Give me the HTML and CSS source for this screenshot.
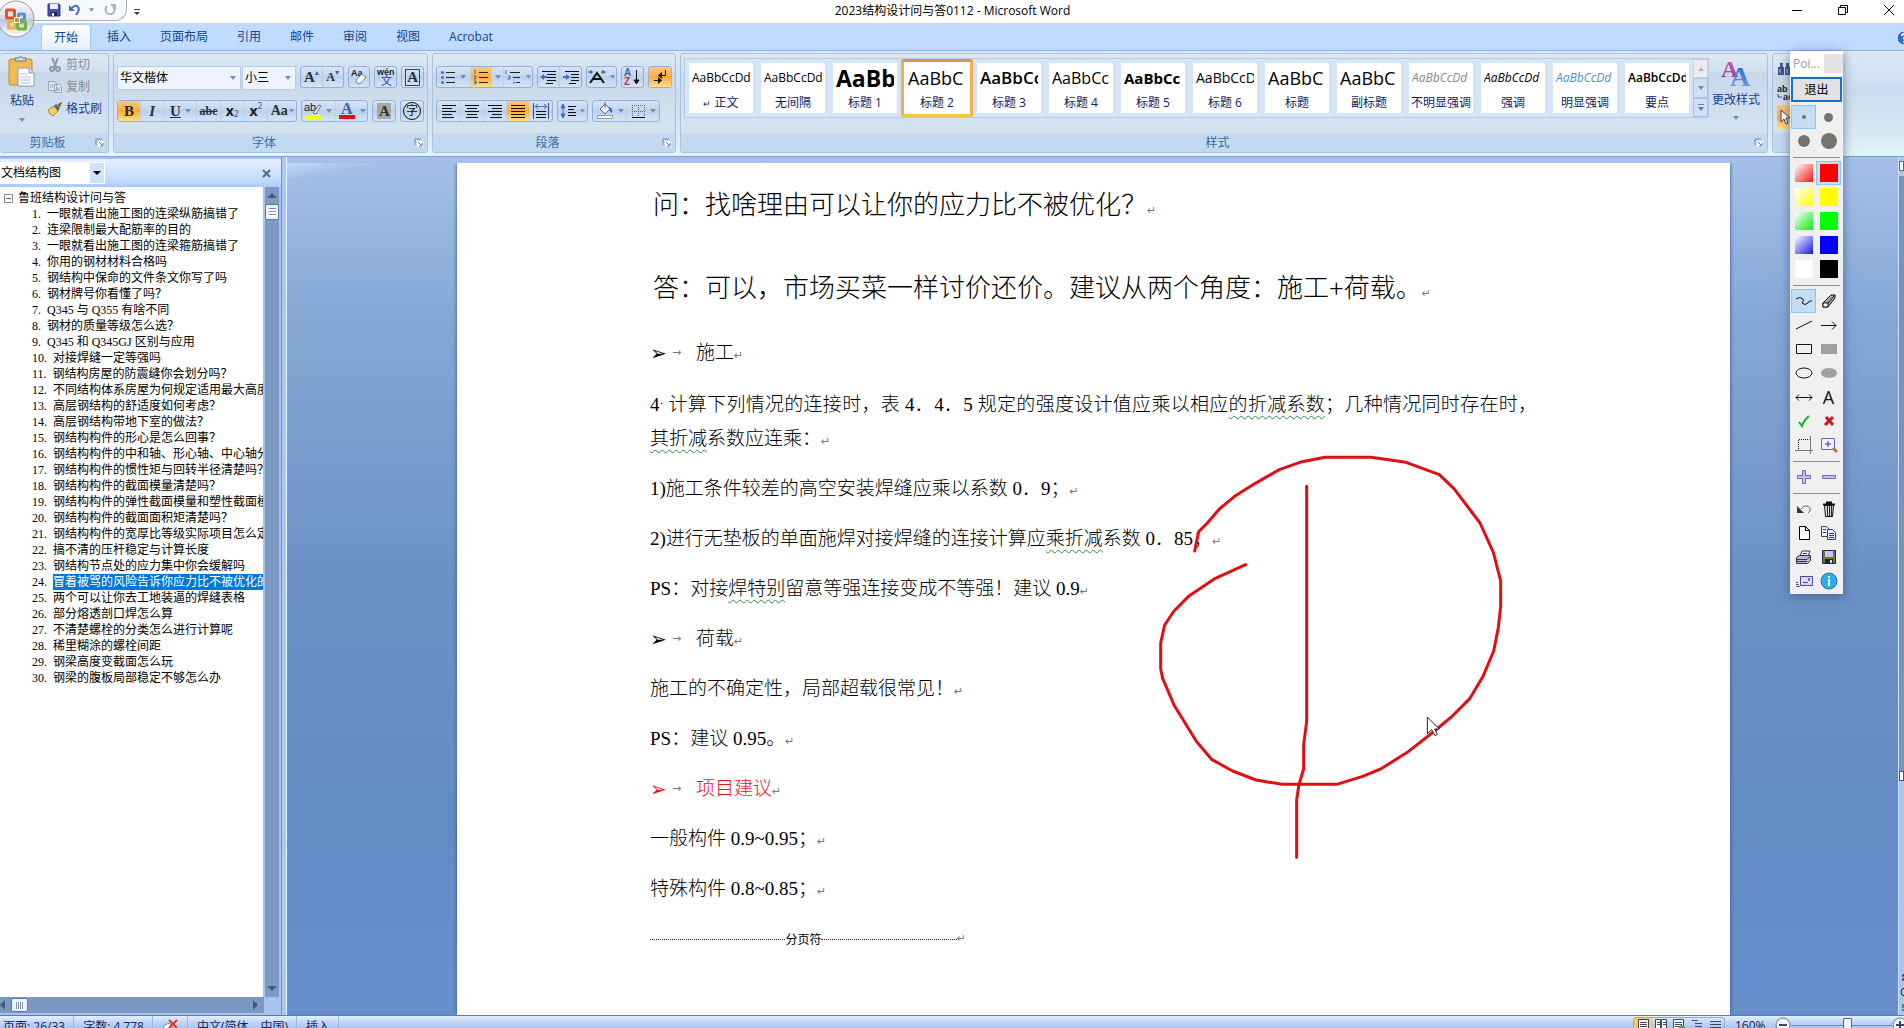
FILE: index.html
```html
<!DOCTYPE html>
<html lang="zh-CN">
<head>
<meta charset="utf-8">
<title>2023结构设计问与答0112 - Microsoft Word</title>
<link rel="stylesheet" href="styles.css">
</head>
<body>
<svg class="defs" aria-hidden="true">
  <defs>
    <linearGradient id="orb" x1="0" y1="0" x2="0" y2="1"><stop offset="0" stop-color="#fdfdfe"/><stop offset=".5" stop-color="#d3d9e6"/><stop offset=".52" stop-color="#bcc6d8"/><stop offset="1" stop-color="#fff"/></linearGradient>
    <linearGradient id="pink" x1="0" y1="0" x2="0" y2="1"><stop offset="0" stop-color="#e35fb2"/><stop offset="1" stop-color="#7a3c9a"/></linearGradient>
    <linearGradient id="blue" x1="0" y1="0" x2="0" y2="1"><stop offset="0" stop-color="#2c5fb4"/><stop offset="1" stop-color="#6fa3ee"/></linearGradient>
    <symbol id="launch" viewBox="0 0 9 9"><path d="M1 7V1h6" fill="none" stroke="#6a87b5"/><path d="M3 3h6v6H3z" fill="#fff"/><path d="M4 4l3 3M8 5v3H5" fill="none" stroke="#5478ac"/></symbol>
    <symbol id="caret" viewBox="0 0 6 4"><path d="M0 0h6L3 4z" fill="#6d8fc4"/></symbol>
  </defs>
</svg>

<header class="titlebar">
  <div class="quick">
    <button class="q" aria-label="保存"><svg width="14" height="14" viewBox="0 0 14 14"><path d="M1 1h11l1 1v11H1z" fill="#4d4fb6" stroke="#2f3190"/><path d="M3 1h8v5H3z" fill="#e9ecfb"/><path d="M4 9h6v4H4z" fill="#20235e"/><path d="M5 10h2v3H5z" fill="#fff"/></svg></button>
    <button class="q" aria-label="撤消"><svg width="12" height="12" viewBox="0 0 12 12"><path d="M2 5q3-4 6-3q3 2 1 6l-2 3" fill="none" stroke="#3d6fc4" stroke-width="2"/><path d="M0 1v6h6z" fill="#3d6fc4"/></svg></button>
    <svg width="5" height="4"><use href="#caret"/></svg>
    <button class="q redo" aria-label="重复"><svg width="12" height="12" viewBox="0 0 12 12"><path d="M3 2q-3 4 0 7q4 3 7-1q1-3-1-5" fill="none" stroke="#adb3bf" stroke-width="2"/><path d="M6 0h6v6z" fill="#adb3bf"/></svg></button>
  </div>
  <button class="q more" aria-label="自定义"><svg width="6" height="6"><path d="M0 0h6v1H0zM0 3h6L3 6z" fill="#333d50"/></svg></button>
  <h1>2023结构设计问与答0112 - Microsoft Word</h1>
  <div class="winbtns">
    <button aria-label="最小化"><svg width="12" height="12"><path d="M1 6.500h10" stroke="#000"/></svg></button>
    <button aria-label="还原"><svg width="12" height="12" fill="none" stroke="#000"><path d="M1.500 3.500h7v7h-7zM3.500 3V1.500h7v7H9"/></svg></button>
    <button aria-label="关闭"><svg width="12" height="12"><path d="M1 1l10 10M11 1L1 11" stroke="#000"/></svg></button>
  </div>
  <button class="orb" aria-label="Office 按钮"><svg width="36" height="38" viewBox="0 0 36 38"><circle cx="16" cy="19" r="18" fill="url(#orb)" stroke="#8d95a6"/><g fill="none" stroke-width="3"><rect x="6.500" y="10" width="8" height="8" rx="1" stroke="#d9542b"/><rect x="18.500" y="14" width="6" height="6" rx="1" stroke="#4a9ad6"/><rect x="8.500" y="21" width="7" height="7" rx="1" stroke="#f0b232"/><rect x="17.500" y="22" width="8" height="7" rx="1" stroke="#77b43c"/></g><path d="M14 17h6v6h-6z" fill="#fff8e0"/><path d="M15 18h4v4h-4z" fill="#e58a35"/></svg></button>
</header>

<nav class="tabs">
  <button class="tab on">开始</button><button class="tab">插入</button><button class="tab">页面布局</button><button class="tab">引用</button><button class="tab">邮件</button><button class="tab">审阅</button><button class="tab">视图</button><button class="tab">Acrobat</button>
  <button class="help" aria-label="帮助"><svg width="16" height="16" viewBox="0 0 16 16"><circle cx="8" cy="8" r="7" fill="#2f6fd0" stroke="#e8f0ff"/><path d="M6 6q0-2 2-2t2 2q0 1-2 2v1.500M8 11v1.500" stroke="#fff" stroke-width="2" fill="none"/></svg></button>
</nav>

<div class="ribbon">
  <section class="group g-clip">
    <div class="body">
      <button class="paste">
        <svg width="28" height="32" viewBox="0 0 28 32"><rect x="1" y="3" width="23" height="26" rx="2" fill="#eebb55" stroke="#c08a35"/><path d="M7 5h11V2h-3q-2-3-5 0H7z" fill="#d7dbe2" stroke="#6b7280"/><path d="M10 12h11l5 5v13H10z" fill="#fff" stroke="#8b97ad"/><path d="M21 12v5h5" fill="#dbe4f2" stroke="#8b97ad"/><path d="M12 18h7M12 21h11M12 24h11M12 27h11" stroke="#b4bccb"/></svg>
        <span>粘贴</span><svg width="6" height="4"><use href="#caret"/></svg>
      </button>
      <div class="stack">
        <button class="line off"><svg width="16" height="16" viewBox="0 0 16 16" fill="none" stroke="#8f99ab" stroke-width="2"><path d="M5 1l4 9M11 1L7 10"/><circle cx="5" cy="12" r="2"/><circle cx="11" cy="12" r="2"/></svg>剪切</button>
        <button class="line off"><svg width="16" height="16" viewBox="0 0 16 16" fill="#e3e8f1" stroke="#98a4b9"><path d="M1.500 2.500h6l2 2v7h-8zM7.500 5.500h5l2 2v6h-7z"/><path d="M3 6h4M3 8h3M9 9h4M9 11h4"/></svg>复制</button>
        <button class="line"><svg width="16" height="16" viewBox="0 0 16 16"><path d="M1 9l6-4 4 5-5 5q-3-1-5-6z" fill="#f2cf5f" stroke="#b18a2b"/><path d="M7 5l2-2 4 4-2 3z" fill="#5a6472"/><path d="M10 4l4-3 1 1-2 4z" fill="#8a6a30"/></svg>格式刷</button>
      </div>
    </div>
    <footer><span>剪贴板</span><button aria-label="剪贴板设置"><svg width="9" height="9"><use href="#launch"/></svg></button></footer>
  </section>

  <section class="group g-font">
    <div class="body rows">
      <div class="row">
        <div class="combos"><select class="combo face" aria-label="字体"><option>华文楷体</option></select><select class="combo size" aria-label="字号"><option>小三</option></select></div>
        <div class="set"><button class="w22 serif">A<sup class="tri">▴</sup></button><button class="w22 serif small">A<sup class="tri">▾</sup></button></div>
        <div class="set"><button class="w22" aria-label="清除格式"><svg width="18" height="18" viewBox="0 0 18 18"><text x="1" y="8" class="t9">Aa</text><path d="M6 12l6-6 4 3-6 7q-4 0-4-4z" fill="#f4f5fb" stroke="#7384ac"/></svg></button></div>
        <div class="set"><button class="w22" aria-label="拼音指南"><svg width="18" height="18" viewBox="0 0 18 18"><text x="0" y="7" class="t8">wén</text><text x="4" y="17" class="t10">文</text></svg></button></div>
        <div class="set"><button class="w22 serif"><span class="boxed">A</span></button></div>
      </div>
      <div class="row">
        <div class="set"><button class="w22 serif on">B</button><button class="w24 serif"><i class="it">I</i></button><button class="w34 serif"><u>U</u><svg width="6" height="4"><use href="#caret"/></svg></button><button class="w24 serif tiny"><s>abc</s></button><button class="w24 sans">x<sub>2</sub></button><button class="w24 sans">x<sup>2</sup></button><button class="w30 serif mid">Aa<svg width="5" height="4"><use href="#caret"/></svg></button></div>
        <div class="set"><button class="w34" aria-label="突出显示"><svg width="18" height="18" viewBox="0 0 18 18"><text x="0" y="9" class="t10b">ab</text><path d="M9 11l6-8 2 1-5 8z" fill="#e8ecf5" stroke="#5d6d94"/><path d="M1 13h16v4H1z" fill="#ff0"/></svg><svg width="6" height="4"><use href="#caret"/></svg></button><button class="w33" aria-label="字体颜色"><svg width="18" height="18" viewBox="0 0 18 18"><text x="3" y="12" class="t16">A</text><path d="M1 13h16v4H1z" fill="#e30f17"/></svg><svg width="6" height="4"><use href="#caret"/></svg></button></div>
        <div class="set"><button class="w22 serif"><span class="shade">A</span></button></div>
        <div class="set"><button class="w22"><span class="ring">字</span></button></div>
      </div>
    </div>
    <footer><span>字体</span><button aria-label="字体设置"><svg width="9" height="9"><use href="#launch"/></svg></button></footer>
  </section>

  <section class="group g-para">
    <div class="body rows">
      <div class="row">
        <div class="set">
          <button class="w33" aria-label="项目符号"><svg width="16" height="16" viewBox="0 0 16 16"><path d="M6 3.500h9M6 8.500h9M6 13.500h9" stroke="#222"/><circle cx="2.500" cy="3.500" r="1.500" fill="#4a6fb5"/><circle cx="2.500" cy="8.500" r="1.500" fill="#4a6fb5"/><circle cx="2.500" cy="13.500" r="1.500" fill="#4a6fb5"/></svg><svg width="6" height="4"><use href="#caret"/></svg></button><button class="w22 on" aria-label="编号"><svg width="16" height="16" viewBox="0 0 16 16"><path d="M6 3.500h9M6 8.500h9M6 13.500h9" stroke="#222"/><path d="M1 2l1-1v4M1 7h2v1l-2 2h2M1 12h2v3H1M1 13.500h2" fill="none" stroke="#4a6fb5"/></svg></button><button class="w12" aria-label="编号选项"><svg width="6" height="4"><use href="#caret"/></svg></button><button class="w30" aria-label="多级列表"><svg width="18" height="16" viewBox="0 0 18 16"><path d="M6 3.500h10M9 8.500h7M12 13.500h4" stroke="#222"/><path d="M2 1v4M4 7h2v3H4v-1h2M10 12v3" fill="none" stroke="#4a6fb5"/></svg><svg width="5" height="4"><use href="#caret"/></svg></button>
        </div>
        <div class="set">
          <button class="w22" aria-label="减少缩进"><svg width="16" height="16" viewBox="0 0 16 16"><path d="M2 2.500h14M7 5.500h9M7 8.500h9M7 11.500h9M6 14.500h7" stroke="#111" stroke-width="1"/><path d="M0 8l4-3v2h3v2H4v2z" fill="#3f6cc0"/></svg></button><button class="w22" aria-label="增加缩进"><svg width="16" height="16" viewBox="0 0 16 16"><path d="M2 2.500h14M8 5.500h8M8 8.500h8M8 11.500h8M6 14.500h7" stroke="#111"/><path d="M7 8L3 5v2H0v2h3v2z" fill="#3f6cc0"/></svg></button>
        </div>
        <div class="set"><button class="w30" aria-label="中文版式"><svg width="18" height="16" viewBox="0 0 18 16"><path d="M2 14L9 4l7 10M5 10h8" fill="none" stroke="#111" stroke-width="2"/><path d="M0 3h5M3 1v4M13 3h5M15 1v4" stroke="#2b3f9a"/></svg><svg width="5" height="4"><use href="#caret"/></svg></button></div>
        <div class="set"><button class="w22" aria-label="排序"><svg width="18" height="18" viewBox="0 0 18 18"><text x="1" y="8" class="t10z">A</text><text x="1" y="17" class="t10r">Z</text><path d="M13.500 2v13M11 12l2.500 4 2.500-4z" stroke="#111" fill="#111"/></svg></button></div>
        <div class="set"><button class="w22 on" aria-label="显示编辑标记"><svg width="16" height="16" viewBox="0 0 16 16"><path d="M13.500 1v5.500H8M2 11.500h5" fill="none" stroke="#111"/><path d="M10 3L6 6.500 10 10zM6 8l4 3.500L6 15z" fill="#111"/></svg></button></div>
      </div>
      <div class="row">
        <div class="set">
          <button class="w23" aria-label="左对齐"><svg width="14" height="14"><path d="M0 1.500h14M0 4.500h10M0 7.500h14M0 10.500h10M0 13.500h12" stroke="#111"/></svg></button><button class="w23" aria-label="居中"><svg width="14" height="14"><path d="M0 1.500h14M2 4.500h10M0 7.500h14M2 10.500h10M1 13.500h12" stroke="#111"/></svg></button><button class="w23" aria-label="右对齐"><svg width="14" height="14"><path d="M0 1.500h14M4 4.500h10M0 7.500h14M4 10.500h10M2 13.500h12" stroke="#111"/></svg></button><button class="w23 on" aria-label="两端对齐"><svg width="14" height="14"><path d="M0 1.500h14M0 4.500h14M0 7.500h14M0 10.500h14M0 13.500h14" stroke="#111"/></svg></button><button class="w23" aria-label="分散对齐"><svg width="16" height="16"><path d="M.5 0v16M15.500 0v16" stroke="#446"/><path d="M2 3.500h12M5 1L2 3.500 5 6M11 1l3 2.500L11 6" stroke="#3f6cc0" fill="none"/><path d="M3 8.500h10M3 11.500h10M3 14.500h10" stroke="#111"/></svg></button>
        </div>
        <div class="set"><button class="w30" aria-label="行距"><svg width="16" height="16"><path d="M3 2v12M1 5l2-4 2 4zM1 11l2 4 2-4z" stroke="#3f6cc0" fill="#3f6cc0"/><path d="M8 3.500h8M8 6.500h6M8 9.500h8M8 12.500h8" stroke="#111"/></svg><svg width="5" height="4"><use href="#caret"/></svg></button></div>
        <div class="set"><button class="w33" aria-label="底纹"><svg width="18" height="18"><path d="M4 7l5-5 5 5-5 5z" fill="#f1f3f8" stroke="#59647c"/><path d="M9 0v6" stroke="#59647c"/><path d="M13 5q4 1 3 6q-3-1-3-6z" fill="#3d66b8"/><path d="M1.500 13.500h15v3h-15z" fill="#fff" stroke="#999"/></svg><svg width="6" height="4"><use href="#caret"/></svg></button><button class="w33" aria-label="边框"><svg width="15" height="15"><path d="M1.500 1v12M7.500 1v12M13.500 1v12M1 1.500h13M1 7.500h13" stroke="#667" stroke-dasharray="1 1"/><path d="M1 13.500h13" stroke="#111" stroke-width="1"/></svg><svg width="6" height="4"><use href="#caret"/></svg></button></div>
      </div>
    </div>
    <footer><span>段落</span><button aria-label="段落设置"><svg width="9" height="9"><use href="#launch"/></svg></button></footer>
  </section>

  <section class="group g-style">
    <div class="body">
      <div class="gallery">
        <button class="style"><b class="p12">AaBbCcDd</b><span><small>↵</small> 正文</span></button>
        <button class="style"><b class="p12">AaBbCcDd</b><span>无间隔</span></button>
        <button class="style"><b class="p23 bold">AaBb</b><span>标题 1</span></button>
        <button class="style sel"><b class="p18">AaBbC</b><span>标题 2</span></button>
        <button class="style"><b class="p17 semi">AaBbCc</b><span>标题 3</span></button>
        <button class="style"><b class="p16">AaBbCc</b><span>标题 4</span></button>
        <button class="style"><b class="p15 bold">AaBbCc</b><span>标题 5</span></button>
        <button class="style"><b class="p14">AaBbCcD</b><span>标题 6</span></button>
        <button class="style"><b class="p18">AaBbC</b><span>标题</span></button>
        <button class="style"><b class="p18">AaBbC</b><span>副标题</span></button>
        <button class="style"><b class="p12 ital gray">AaBbCcDd</b><span>不明显强调</span></button>
        <button class="style"><b class="p12 ital">AaBbCcDd</b><span>强调</span></button>
        <button class="style"><b class="p12 ital sky">AaBbCcDd</b><span>明显强调</span></button>
        <button class="style"><b class="p12 semi">AaBbCcDd</b><span>要点</span></button>
        <div class="gscroll"><button class="dim" aria-label="上一行"><svg width="6" height="4"><path d="M0 4h6L3 0z" fill="#b4b8c0"/></svg></button><button aria-label="下一行"><svg width="6" height="4"><use href="#caret"/></svg></button><button aria-label="其他"><svg width="6" height="7"><path d="M0 0h6v1H0zM0 3h6L3 7z" fill="#5f80b6"/></svg></button></div>
      </div>
      <button class="change"><svg width="30" height="30" viewBox="0 0 30 30"><text x="0" y="19" class="big1">A</text><text x="9" y="28" class="big2">A</text></svg><span>更改样式</span><svg width="6" height="4"><use href="#caret"/></svg></button>
    </div>
    <footer><span>样式</span><button aria-label="样式设置"><svg width="9" height="9"><use href="#launch"/></svg></button></footer>
  </section>

  <section class="group g-edit">
    <div class="body">
      <button aria-label="查找"><svg width="16" height="16"><path d="M3 2h3v4H3zM9 2h3v4H9zM1 6h6v8H1zM8 6h6v8H8z" fill="#3d4f86"/><path d="M3 8v4M10 8v4M6 3v2" stroke="#c7d3ee"/></svg></button>
      <button aria-label="替换"><svg width="16" height="16"><text x="0" y="7" class="t9">ab</text><text x="6" y="15" class="t9">ac</text><path d="M1 9v3h4" stroke="#334a9a" fill="none"/></svg></button>
      <button class="on" aria-label="选择"><svg width="16" height="18"><path d="M4 2v12l3-3 2 5 2-1-2-5h4z" fill="#fff" stroke="#33415f"/></svg></button>
    </div>
    <footer></footer>
  </section>
</div>

<main class="work">
  <aside class="pane">
    <div class="panehead"><select aria-label="导航"><option>文档结构图</option></select><button aria-label="关闭窗格"><svg width="9" height="9"><path d="M1 1l7 7M8 1L1 8" stroke="#5a6a86" stroke-width="2"/></svg></button></div>
    <div class="panebody">
      <div class="tree">
        <div class="root"><svg width="9" height="9"><path d="M.5.500h8v8h-8z" fill="#fff" stroke="#8a8a8a"/><path d="M2 4.500h5" stroke="#4466aa"/></svg>鲁班结构设计问与答</div>
        <ul>
          <li><span>1.</span><a href="#t1">一眼就看出施工图的连梁纵筋搞错了</a></li>
          <li><span>2.</span><a href="#t2">连梁限制最大配筋率的目的</a></li>
          <li><span>3.</span><a href="#t3">一眼就看出施工图的连梁箍筋搞错了</a></li>
          <li><span>4.</span><a href="#t4">你用的钢材材料合格吗</a></li>
          <li><span>5.</span><a href="#t5">钢结构中保命的文件条文你写了吗</a></li>
          <li><span>6.</span><a href="#t6">钢材牌号你看懂了吗？</a></li>
          <li><span>7.</span><a href="#t7">Q345 与 Q355 有啥不同</a></li>
          <li><span>8.</span><a href="#t8">钢材的质量等级怎么选？</a></li>
          <li><span>9.</span><a href="#t9">Q345 和 Q345GJ 区别与应用</a></li>
          <li><span>10.</span><a href="#t10">对接焊缝一定等强吗</a></li>
          <li><span>11.</span><a href="#t11">钢结构房屋的防震缝你会划分吗？</a></li>
          <li><span>12.</span><a href="#t12">不同结构体系房屋为何规定适用最大高度</a></li>
          <li><span>13.</span><a href="#t13">高层钢结构的舒适度如何考虑？</a></li>
          <li><span>14.</span><a href="#t14">高层钢结构带地下室的做法？</a></li>
          <li><span>15.</span><a href="#t15">钢结构构件的形心是怎么回事？</a></li>
          <li><span>16.</span><a href="#t16">钢结构构件的中和轴、形心轴、中心轴分</a></li>
          <li><span>17.</span><a href="#t17">钢结构构件的惯性矩与回转半径清楚吗？</a></li>
          <li><span>18.</span><a href="#t18">钢结构构件的截面模量清楚吗？</a></li>
          <li><span>19.</span><a href="#t19">钢结构构件的弹性截面模量和塑性截面模</a></li>
          <li><span>20.</span><a href="#t20">钢结构构件的截面面积矩清楚吗？</a></li>
          <li><span>21.</span><a href="#t21">钢结构构件的宽厚比等级实际项目怎么定</a></li>
          <li><span>22.</span><a href="#t22">搞不清的压杆稳定与计算长度</a></li>
          <li><span>23.</span><a href="#t23">钢结构节点处的应力集中你会缓解吗</a></li>
          <li><span>24.</span><a class="cur" href="#t24">冒着被骂的风险告诉你应力比不被优化的</a></li>
          <li><span>25.</span><a href="#t25">两个可以让你去工地装逼的焊缝表格</a></li>
          <li><span>26.</span><a href="#t26">部分熔透剖口焊怎么算</a></li>
          <li><span>27.</span><a href="#t27">不清楚螺栓的分类怎么进行计算呢</a></li>
          <li><span>28.</span><a href="#t28">稀里糊涂的螺栓间距</a></li>
          <li><span>29.</span><a href="#t29">钢梁高度变截面怎么玩</a></li>
          <li><span>30.</span><a href="#t30">钢梁的腹板局部稳定不够怎么办</a></li>
        </ul>
      </div>
      <div class="vbar"><svg width="10" height="5"><path d="M0 5h10L5 0z" fill="#44597f"/></svg><i class="thumb"></i><svg class="end" width="10" height="5"><path d="M0 0h10L5 5z" fill="#44597f"/></svg></div>
    </div>
    <div class="hbar"><svg width="5" height="10"><path d="M5 0v10L0 5z" fill="#44597f"/></svg><i class="thumb h"></i><svg class="hend" width="5" height="10"><path d="M0 0v10l5-5z" fill="#44597f"/></svg></div>
  </aside>
  <div class="splitter"></div>

  <div class="canvas">
    <article class="page">
      <h2>问：找啥理由可以让你的应力比不被优化？<em>↵</em></h2>
      <h2>答：可以，市场买菜一样讨价还价。建议从两个角度：施工+荷载。<em>↵</em></h2>
      <p class="bullet"><i>➢</i><em>→</em><span>施工<em>↵</em></span></p>
      <p>4<small>·</small> 计算下列情况的连接时，表 4．4．5 规定的强度设计值应乘以相应<u>的折减系数</u>；几种情况同时存在时，<u>其折减</u>系数应连乘：<em>↵</em></p>
      <p>1)施工条件较差的高空安装焊缝应乘以系数 0．9；<em>↵</em></p>
      <p>2)进行无垫板的单面施焊对接焊缝的连接计算应<u>乘折减</u>系数 0．85；<em>↵</em></p>
      <p>PS：对接<u>焊特别</u>留意等强连接变成不等强！建议 0.9<em>↵</em></p>
      <p class="bullet"><i>➢</i><em>→</em><span>荷载<em>↵</em></span></p>
      <p>施工的不确定性，局部超载很常见！<em>↵</em></p>
      <p>PS：建议 0.95。<em>↵</em></p>
      <p class="bullet red"><i>➢</i><em>→</em><span>项目建议<em>↵</em></span></p>
      <p>一般构件 0.9~0.95；<em>↵</em></p>
      <p>特殊构件 0.8~0.85；<em>↵</em></p>
      <div class="break"><i></i>分页符<i></i><em>↵</em></div>
    </article>
    <svg class="ink" width="400" height="430" viewBox="0 0 1200 1290">
      <g fill="none" stroke="#e10f14" stroke-width="9" stroke-linecap="round" stroke-linejoin="round">
        <path d="M134 330L146 272L172 246L208 204L254 166L316 127L388 86L456 62L525 49H663L768 64L868 101L912 143L990 246L1030 334L1052 420V496L1045 560L1031 630L1000 704L960 772L904 828L846 876L772 934L692 984L638 1006L560 1030H396L318 1017L248 990L186 956L140 902L72 792L38 712L32 684V606L44 552L72 510L118 464L196 412L287 371"/>
        <path d="M470 136V842L461 910V984L447 1030L440 1076V1249"/>
      </g>
      <path d="M832 828v50l13-12 10 18 7-4-8-16h14z" fill="#fff" stroke="#222" stroke-width="3"/>
    </svg>
  </div>
  <div class="docbar"><i class="ruler"></i><i class="track"></i><i class="mark"></i><svg width="6" height="44" viewBox="0 0 6 44" fill="none" stroke="#222"><path d="M6 2L3 5h3M6 6L3 9h3M6 17a4 4 0 0 0 0 8M3 34h3L3 37M3 39h3"/></svg></div>
</main>

<footer class="status">
  <button>页面: 26/33</button><button>字数: 4,778</button>
  <button aria-label="校对"><svg width="17" height="16"><path d="M1 7l6-3 5 7-6 3z" fill="#f7f9fd" stroke="#7488ae"/><path d="M7 1l8 8M15 1L7 9" stroke="#e33a2a" stroke-width="2"/></svg></button>
  <button>中文(简体，中国)</button><button>插入</button>
  <div class="views">
    <button class="on" aria-label="页面视图"><svg width="13" height="12"><path d="M1.500.500h10v11h-10z" fill="#fff" stroke="#446"/><path d="M3 3.500h7M3 5.500h7M3 7.500h7M3 9.500h7" stroke="#446"/></svg></button><button aria-label="阅读版式"><svg width="13" height="12"><path d="M.500.500h5v10h-5zM6.500.500h5v10h-5z" fill="#fff" stroke="#446"/><path d="M2 3.500h3M2 5.500h3M8 3.500h3M8 5.500h3" stroke="#446"/></svg></button><button aria-label="Web 版式"><svg width="13" height="12"><path d="M.500.500h10v11h-10z" fill="#fff" stroke="#446"/><path d="M2 3.500h7M2 5.500h7M2 7.500h5" stroke="#446"/><circle cx="9" cy="9" r="3" fill="#59a05a"/></svg></button><button aria-label="大纲"><svg width="13" height="12"><path d="M1 1.500h6M4 4.500h7M4 7.500h7M7 10.500h5" stroke="#446"/></svg></button><button aria-label="草稿"><svg width="13" height="12"><path d="M1 2.500h11M1 5.500h11M1 8.500h11M1 11.500h11" stroke="#446"/></svg></button>
  </div>
  <span class="pct">160%</span>
  <button class="zoom" aria-label="缩小"><svg width="16" height="16"><circle cx="8" cy="8" r="7" fill="#eef4fd" stroke="#5a78a8"/><path d="M4 8h8" stroke="#445" stroke-width="2"/></svg></button>
  <input type="range" aria-label="显示比例" min="0" max="100" value="56">
  <button class="zoom" aria-label="放大"><svg width="16" height="16"><circle cx="8" cy="8" r="7" fill="#eef4fd" stroke="#5a78a8"/><path d="M4 8h8M8 4v8" stroke="#445" stroke-width="2"/></svg></button>
</footer>

<div class="palette">
  <div class="phead"><span>Poi...</span><i></i></div>
  <button class="exit">退出</button>
  <div class="cells">
    <button class="sel"><i class="dot d4"></i></button><button><i class="dot d8"></i></button>
    <button><i class="dot d12"></i></button><button><i class="dot d16"></i></button>
  </div>
  <hr>
  <div class="cells">
    <button><i class="sw r1"></i></button><button class="sel"><i class="sw r2"></i></button>
    <button><i class="sw y1"></i></button><button><i class="sw y2"></i></button>
    <button><i class="sw g1"></i></button><button><i class="sw g2"></i></button>
    <button><i class="sw b1"></i></button><button><i class="sw b2"></i></button>
    <button><i class="sw w1"></i></button><button><i class="sw k1"></i></button>
  </div>
  <hr>
  <div class="cells">
    <button class="sel"><svg width="18" height="16"><path d="M1 6q4-3 7 0q1 2-1 4q3 3 6 0q1-3 4-2" fill="none" stroke="#112"/></svg></button><button><svg width="16" height="16"><path d="M2 10L10 2h4v3l-7 9H2z" fill="#aaa" stroke="#111"/><path d="M2 10h5v4H2z" fill="#fff" stroke="#111"/><path d="M7 10l7-8" stroke="#111"/></svg></button>
    <button><svg width="18" height="16"><path d="M1 12L17 4" stroke="#112"/></svg></button><button><svg width="18" height="16"><path d="M1 8.500h15M12 4.500l4 4-4 4" fill="none" stroke="#112"/></svg></button>
    <button><svg width="18" height="16"><path d="M1.500 3.500h15v9h-15z" fill="none" stroke="#112" /></svg></button><button><svg width="18" height="16"><path d="M1 3h16v10H1z" fill="#a0a0a0"/></svg></button>
    <button><svg width="18" height="16"><ellipse cx="9" cy="8" rx="8" ry="5" fill="none" stroke="#112"/></svg></button><button><svg width="18" height="16"><ellipse cx="9" cy="8" rx="8" ry="5" fill="#a0a0a0"/></svg></button>
    <button><svg width="18" height="16"><path d="M1 8.500h16M4 5.500l-3 3 3 3M14 5.500l3 3-3 3" fill="none" stroke="#112"/></svg></button><button class="lettr">A</button>
    <button><svg width="16" height="16"><path d="M3 9l3 4q2-6 7-10" fill="none" stroke="#19b219" stroke-width="2"/></svg></button><button><svg width="16" height="16"><path d="M5 4l7 8M12 4l-8 8" stroke="#d4121a" stroke-width="3"/></svg></button>
    <button><svg width="18" height="18"><path d="M3.500 13V3.500h11" stroke="#111" fill="none" stroke-dasharray="1 1"/><path d="M0 14.500h18M15.500 0v18" stroke="#777"/></svg></button><button><svg width="18" height="18"><path d="M1.500 2.500h13v11h-13z" fill="#f0f0ff" stroke="#6a62b0"/><path d="M8 5v6M5 8h6" stroke="#333a80"/><path d="M13 12l4 4" stroke="#a5784a" stroke-width="3"/></svg></button>
  </div>
  <hr>
  <div class="cells">
    <button><svg width="16" height="16"><path d="M6.500 1.500h3v5h5v3h-5v5h-3v-5h-5v-3h5z" fill="#c3c0ee" stroke="#6f6ab4"/></svg></button><button><svg width="16" height="16"><path d="M1.500 6.500h13v3h-13z" fill="#c3c0ee" stroke="#6f6ab4"/></svg></button>
  </div>
  <hr>
  <div class="cells">
    <button><svg width="16" height="16"><path d="M1 5v7h7z" fill="#334"/><path d="M5 8q3-4 6-3 4 1 3 5l-2 2" fill="none" stroke="#5b5b88" stroke-width="1"/></svg></button><button><svg width="16" height="18"><path d="M3.500 5.500h9l-1 11h-7z" fill="#ddd" stroke="#111"/><path d="M6.500 6v10M8.500 6v10M10.500 6v10" stroke="#223"/><path d="M2 4.500h12M5 2.500h6" stroke="#111" stroke-width="2"/></svg></button>
    <button><svg width="16" height="16"><path d="M3.500 1.500h6l4 4v9h-10zM9.500 1.500v4h4" fill="#fff" stroke="#000"/></svg></button><button><svg width="18" height="16"><path d="M1.500 1.500h5l3 3v7h-8z" fill="#e8e8ff" stroke="#445"/><path d="M7.500 4.500h5l3 3v7h-8z" fill="#e8e8ff" stroke="#2b34b4"/><path d="M3 4.500h3M3 7.500h3M9 8.500h5M9 10.500h5M9 12.500h5" stroke="#2b34b4"/></svg></button>
    <button><svg width="18" height="16"><path d="M5 7l2-5h8l-2 5" fill="#fff" stroke="#334"/><path d="M1.500 8.500l3-2h11v5l-3 3h-11z" fill="#b9b6da" stroke="#334"/><path d="M8 4.500h4M2 10.500h10l3-3M2 12.500h10" stroke="#334" fill="none"/></svg></button><button><svg width="16" height="16"><path d="M1.500 1.500h13v13h-13z" fill="#77733c" stroke="#222a44"/><path d="M4 2h8v6H4z" fill="#c6c3f5"/><path d="M4 10h8v5H4z" fill="#223"/><path d="M9 11h2v3H9z" fill="#ddd"/></svg></button>
    <button><svg width="18" height="16"><path d="M5.500 3.500h12v9h-12z" fill="#dcdaff" stroke="#4a4794"/><path d="M13 5h2v3h-2z" fill="#6f6ab4"/><path d="M8 9.500h5M1 9.500h2M1 11.500h3M1 13.500h4" stroke="#556"/></svg></button><button><svg width="18" height="18"><circle cx="9" cy="9" r="8" fill="#27b0ec" stroke="#3a6a8c"/><path d="M9 4v2M9 7v7" stroke="#fff" stroke-width="2"/></svg></button>
  </div>
</div>
</body>
</html>
```
FILE: styles.css
```css
* { box-sizing: border-box; }
html, body { height: 100%; }
body {
  margin: 0; display: flex; flex-direction: column; overflow: hidden; position: relative;
  font: 12px/16px "Open Sans", "Noto Sans CJK SC", sans-serif; color: #15428b; background: #fff;
}
button { font: inherit; color: inherit; background: none; border: 0; padding: 0; margin: 0; display: flex; align-items: center; justify-content: center; white-space: nowrap; }
svg { flex: none; display: block; }
.defs { position: absolute; width: 0; height: 0; }
i, em { font-style: normal; }
.it { font-style: italic; }

/* title bar */
.titlebar { flex: 0 0 23px; display: flex; align-items: center; position: relative; padding-left: 30px; }
.quick { display: flex; align-items: center; gap: 8px; width: 97px; height: 21px; margin-bottom: 2px; padding-left: 17px; border: 1px solid #a9aeb8; border-width: 0 1px 1px 0; border-radius: 0 0 12px 0; background: #f7f8fa; }
.redo { margin-left: 2px; }
.more { margin-left: 7px; }
.titlebar h1 { flex: 1; margin: 0; font: 12px/20px "Open Sans", "Noto Sans CJK SC", sans-serif; color: #000; text-align: center; padding: 0 26px 2px 0; }
.winbtns { display: flex; gap: 34px; padding: 0 9px 4px 0; width: 113px; flex: none; }
.orb { position: absolute; left: 0; top: 0; z-index: 3; }

/* tabs */
.tabs { flex: 0 0 27px; display: flex; gap: 5px; padding: 2px 0 0 42px; background: #bfdbff; border-bottom: 1px solid #8db2e3; }
.tab { padding: 0 12px; height: 24px; }
.tab.on { height: 25px; background: linear-gradient(#fff, #e6effa); border-radius: 3px 3px 0 0; box-shadow: 0 0 2px #7fa6dc; }
.help { margin-left: auto; margin-right: -8px; }

/* ribbon */
.ribbon { flex: 0 0 106px; display: flex; gap: 4px; padding: 2px 0 3px; background: linear-gradient(#dce7f5, #cbdcf0 40%, #d6e6f2 75%, #e2f5fc); border-bottom: 1px solid #7f9fcf; }
.group { display: flex; flex-direction: column; flex: none; border: 1px solid #a9c2df; border-radius: 3px; background: linear-gradient(#dde7f5, #d3dfee 18%, #c8d8ea 19%, #d9e7f2); }
.group > .body { flex: 1; display: flex; min-height: 0; }
.group > footer { flex: 0 0 19px; display: flex; align-items: center; background: #c2d9f0; color: #3e6aaa; padding-right: 4px; }
.group > footer span { flex: 1; text-align: center; }
.g-clip { width: 109px; border-left: 0; }
.g-font { width: 315px; }
.g-para { width: 244px; }
.g-style { flex: 1; }
.g-edit { width: 60px; margin-right: 72px; }
.paste { flex-direction: column; width: 44px; gap: 4px; padding-top: 2px; justify-content: flex-start; }
.paste svg:last-child, .change svg:last-child { margin-top: 4px; }
.paste span { line-height: 18px; }
.stack { display: flex; flex-direction: column; }
.line { height: 22px; gap: 3px; padding-left: 3px; justify-content: flex-start; }
.off { color: #8d8d8d; }

.rows { flex-direction: column; gap: 11px; padding: 12px 3px 0; }
.row { display: flex; gap: 4px; height: 23px; }
.combos { display: flex; gap: 1px; }
.combo { appearance: none; height: 24px; border: 1px solid #b9cde8; border-radius: 0; background: #edf4fd url("data:image/svg+xml,%3Csvg xmlns='http://www.w3.org/2000/svg' width='6' height='4'%3E%3Cpath d='M0 0h6L3 4z' fill='%236d8fc4'/%3E%3C/svg%3E") no-repeat right 4px center; font: inherit; color: #000; padding: 0 2px; }
.face { width: 124px; }
.size { width: 54px; }
.set { display: flex; height: 22px; border: 1px solid #93b1da; border-radius: 3px; background: linear-gradient(#d6e4f5, #c3d7ee 45%, #b9d0ea 46%, #d3e4f5); overflow: hidden; }
.set button + button { border-left: 1px solid #bdd0e8; }
.set .on, .g-edit .on { background: linear-gradient(#fbc879, #fdb04b 45%, #fca52f 46%, #fee08a); }
.w12 { width: 12px; } .w22 { width: 22px; } .w23 { width: 23px; } .w24 { width: 24px; } .w30 { width: 29px; } .w33 { width: 33px; } .w34 { width: 33px; }
.w34, .w33, .w30 { gap: 4px; }
.serif { font: bold 15px/20px "Liberation Serif", serif; color: #2b2f3a; }
.small, .tiny { font-size: 12px; }
.mid { gap: 1px; font-size: 14px; }
.sans { font: bold 14px/20px "Open Sans", sans-serif; color: #222; }
.serif sup, .sans sup, .sans sub { font: 8px/8px "DejaVu Sans", sans-serif; color: #345fae; }
.sans sup, .serif sup { align-self: flex-start; padding-top: 2px; }
.sans sub { align-self: flex-end; padding-bottom: 2px; }
.boxed { border: 1px solid #444; line-height: 15px; width: 15px; text-align: center; }
.shade { background: #a7a7a7; line-height: 16px; width: 14px; text-align: center; }
.ring { border: 1px solid #111; border-radius: 50%; width: 18px; height: 18px; line-height: 15px; color: #111; }
text { font-family: "Liberation Serif", "Noto Sans CJK SC", serif; fill: #222; }
.t8 { font: bold 9px "Liberation Sans", sans-serif; }
.t9 { font: bold 9px "Liberation Sans", sans-serif; }
.t10 { font-size: 11px; fill: #2b3fb0; }
.t10b { font: 11px "Liberation Sans", sans-serif; }
.t10z { font: bold 10px "Liberation Sans", sans-serif; fill: #3b62b0; }
.t10r { font: bold 10px "Liberation Sans", sans-serif; fill: #b23a4c; }
.t16 { font-weight: bold; font-size: 16px; fill: #3d5f9f; }

.g-style > .body { padding: 4px 4px 0 3px; }
.gallery { flex: 1; display: flex; height: 60px; border: 1px solid #b4cbe8; background: #d5e5f7; overflow: hidden; }
.style { flex: 0 0 72px; height: 58px; flex-direction: column; align-items: stretch; justify-content: flex-start; border: 4px solid #d5e5f7; background: #fff; color: #0e1c64; overflow: hidden; }
.style.sel { border: 3px solid #efb14a; border-color: #d8954c #efb14a #f5c743; border-radius: 3px; padding: 1px; }
.style b { height: 32px; line-height: 30px; margin: 0 3px; overflow: hidden; text-align: left; font-weight: 400; color: #000; font-family: "Open Sans", sans-serif; }
.style small { font-size: 9px; }
.style .bold { font-weight: 700; } .style .semi { font-weight: 600; } .style .ital { font-style: italic; }
.style .gray { color: #8a8a8a; } .style .sky { color: #4a8fd0; }
.p12 { font-size: 12px; } .p14 { font-size: 14px; } .p15 { font-size: 15px; } .p16 { font-size: 16px; } .p17 { font-size: 17px; } .p18 { font-size: 18px; } .p23 { font-size: 23px; }
.gscroll { margin-left: auto; width: 15px; flex: none; display: flex; flex-direction: column; }
.gscroll button { flex: 1; border: 1px solid #a9c2e4; background: #cfe0f5; }
.gscroll .dim { background: #e9ebee; border-color: #cdd2da; }
.change { flex-direction: column; justify-content: flex-start; gap: 4px; width: 54px; flex: none; }
.big1 { font: bold 24px "Liberation Serif", serif; fill: url(#pink); }
.big2 { font: bold 28px "Liberation Serif", serif; fill: url(#blue); }
.g-edit > .body { flex-direction: column; padding: 3px 4px 0; }
.g-edit .body button { height: 24px; width: 40px; justify-content: flex-start; }

/* work area */
.work { flex: 1; display: flex; min-height: 0; background: #a7c3ec; }
.pane { flex: 0 0 281px; min-width: 0; display: flex; flex-direction: column; padding-top: 2px; min-height: 0; }
.panehead { flex: 0 0 28px; display: flex; align-items: center; justify-content: space-between; padding-right: 10px; background: linear-gradient(#e6f0ff, #c0d9fd 80%, #a5cbfb); }
.panehead select { appearance: none; width: 105px; height: 22px; border: 1px solid #fff; border-left: 0; border-radius: 0; font: inherit; color: #000; padding: 0 0 0 1px; background: #fff url("data:image/svg+xml,%3Csvg xmlns='http://www.w3.org/2000/svg' width='14' height='22'%3E%3Cpath d='M0 0h14v22H0z' fill='%23cfe2fb'/%3E%3Cpath d='M3 9h8l-4 4z'/%3E%3C/svg%3E") no-repeat right center; }
.panebody { flex: 1; display: flex; min-height: 0; background: #fff; }
.tree { flex: 1; min-width: 0; overflow: hidden; padding-top: 3px; font: 12px/16px "Liberation Serif", "Noto Sans CJK SC", serif; color: #000; white-space: nowrap; }
.root { display: flex; align-items: center; gap: 5px; padding-left: 4px; height: 16px; }
.tree ul { list-style: none; margin: 0; padding: 0 0 0 32px; }
.tree li { display: flex; gap: 6px; height: 16px; }
.tree a { color: inherit; text-decoration: none; }
.tree .cur { background: #0078d7; color: #fff; }
.vbar { flex: 0 0 17px; display: flex; flex-direction: column; align-items: center; gap: 6px; padding: 6px 0; background: #7d9ac4; border: solid #a7c3ec; border-width: 0 2px; }
.vbar .thumb { width: 14px; height: 16px; border: 1px solid #5d7aa8; border-radius: 2px; background: repeating-linear-gradient(#8190aa 0 1px, #fff 1px 3px) center / 7px 9px no-repeat #eef2f8; }
.end { margin-top: auto; }
.hbar { flex: 0 0 16px; display: flex; align-items: center; gap: 6px; margin-right: 17px; padding-right: 6px; background: #7a98c2; margin-bottom: 2px; }
.thumb.h { width: 17px; height: 14px; border: 1px solid #5d7aa8; border-radius: 2px; background: repeating-linear-gradient(90deg, #8190aa 0 1px, #fff 1px 2px) center / 8px 7px no-repeat #eef2f8; }
.hend { margin-left: auto; }
.splitter { flex: 0 0 6px; background: linear-gradient(90deg, #6f92c8 0 1px, #a9c8f7 1px 5px, #f0f6ff 5px); }
.canvas { flex: 1; min-width: 0; position: relative; display: flex; padding: 6px 168px 0 170px; background: linear-gradient(170deg, #c2d8f4 0, #a5c1e8 8%, transparent 8%) 0 6px / 170px 180px no-repeat, linear-gradient(#a5c1ea, #87a8d6 18%, #6b91c4 50%, #638cc5 80%, #678fce); }
.page { flex: 1; min-width: 0; background: #fff; box-shadow: 0 0 4px #33507c; clip-path: inset(0 -5px); padding: 18px 193px 0 193px; color: #000; font: 19px/34px "Liberation Serif", "Noto Sans CJK SC Light", "Noto Sans CJK SC", serif; }
.page h2 { margin: 0 0 33px; font: 400 26px/50px "Liberation Serif", "Noto Sans CJK SC Light", "Noto Sans CJK SC", serif; padding-left: 3px; }
.page h2 + h2 { margin-bottom: 22px; }
.page p { margin: 0 0 16px; text-align: justify; }
.page em { font: 11px/16px "DejaVu Sans", sans-serif; color: #777; }
.page small { font-size: 12px; vertical-align: 4px; }
.page u { text-decoration: underline wavy #2e8b3a 1px; text-underline-offset: 4px; }
.bullet { display: grid; grid-template-columns: 22px 24px auto; align-items: center; }
.bullet i { font: 20px/34px "DejaVu Sans", sans-serif; }
.page .red { color: #e8141c; }
.break { display: flex; align-items: center; width: 316px; font: 12px/34px "Noto Sans CJK SC", sans-serif; }
.break i { flex: 1; border-top: 1px dotted #222; }
.ink { position: absolute; left: 863px; top: 284px; }
.docbar { flex: 0 0 6px; display: flex; flex-direction: column; align-items: stretch; overflow: hidden; border-left: 1px solid #cfe1fa; background: #a9c5f0; padding-top: 4px; }
.docbar .ruler { height: 10px; background: #fff; border: 1px solid #667; }
.docbar .track { flex: 5; background: #7793bd; margin-top: 5px; }
.docbar .mark { height: 10px; background: #fff; border: 1px solid #456; }
.docbar svg { margin-top: 190px; margin-bottom: 0; }

/* status bar */
.status { flex: 0 0 13px; overflow: hidden; display: flex; align-items: flex-start; border-top: 1px solid #567db1; background: linear-gradient(#e4effd, #bcd3f5 60%, #aac8f2); color: #15285a; }
.status > button { height: 22px; padding: 0 8px 0 9px; border-right: 1px solid #9cb9e2; }
.status > button:first-child { padding-left: 3px; }
.views { margin-left: auto; display: flex; border: 1px solid #8facd9; border-radius: 3px; height: 22px; margin-top: 1px; }
.views button { width: 18px; height: 14px; }
.views .on { background: #fbc66c; }
.pct { width: 50px; padding-left: 10px; line-height: 20px; }
.status > button.zoom { padding: 0; border: 0; width: 16px; height: 18px; }
.status input { appearance: none; width: 101px; height: 18px; margin: 0; background: linear-gradient(#7089b0, #7089b0) center / 100% 1px no-repeat; }
.status input::-webkit-slider-thumb { appearance: none; width: 9px; height: 14px; background: #eef4fd; border: 1px solid #4a6797; border-radius: 1px 1px 4px 4px; }
.status > button.zoom:last-child { margin-right: -4px; }

/* floating pen palette */
.palette { position: absolute; right: 61px; top: 51px; width: 53px; padding: 1px; background: #f0f0f0; box-shadow: 0 2px 10px #2b426b99; }
.phead { display: flex; justify-content: space-between; align-items: center; height: 25px; padding-left: 3px; margin: -1px -1px 1px; background: #fff; color: #999; font: 12px/20px "Open Sans", sans-serif; }
.phead i { width: 19px; height: 19px; background: #e4e4e4; }
.exit { width: 100%; height: 25px; border: 2px solid #1173c6; background: #e1e1e1; color: #000; margin-bottom: 3px; }
.cells { display: grid; grid-template-columns: 25px 25px; grid-auto-rows: 24px; }
.cells .sel { background: #c3ddf3; border: 1px solid #8fc3ea; }
.palette hr { border: 0; height: 1px; background: #8c8c8c; margin: 4px 2px 3px; }
.dot { background: #74746f; border-radius: 50%; }
.d4 { width: 4px; height: 4px; } .d8 { width: 9px; height: 9px; } .d12 { width: 12px; height: 12px; } .d16 { width: 16px; height: 16px; }
.sw { width: 18px; height: 18px; }
.r1 { background: linear-gradient(135deg, #fff, #f01818); } .r2 { background: #f00; }
.y1 { background: linear-gradient(135deg, #fff, #ff0); } .y2 { background: #ff0; }
.g1 { background: linear-gradient(135deg, #fff, #10e818); } .g2 { background: #0f0; }
.b1 { background: linear-gradient(135deg, #fff, #1414e8); } .b2 { background: #00f; }
.w1 { background: #fff; } .k1 { background: #000; }
.lettr { font: 18px/20px "Open Sans", sans-serif; color: #111; }
```
